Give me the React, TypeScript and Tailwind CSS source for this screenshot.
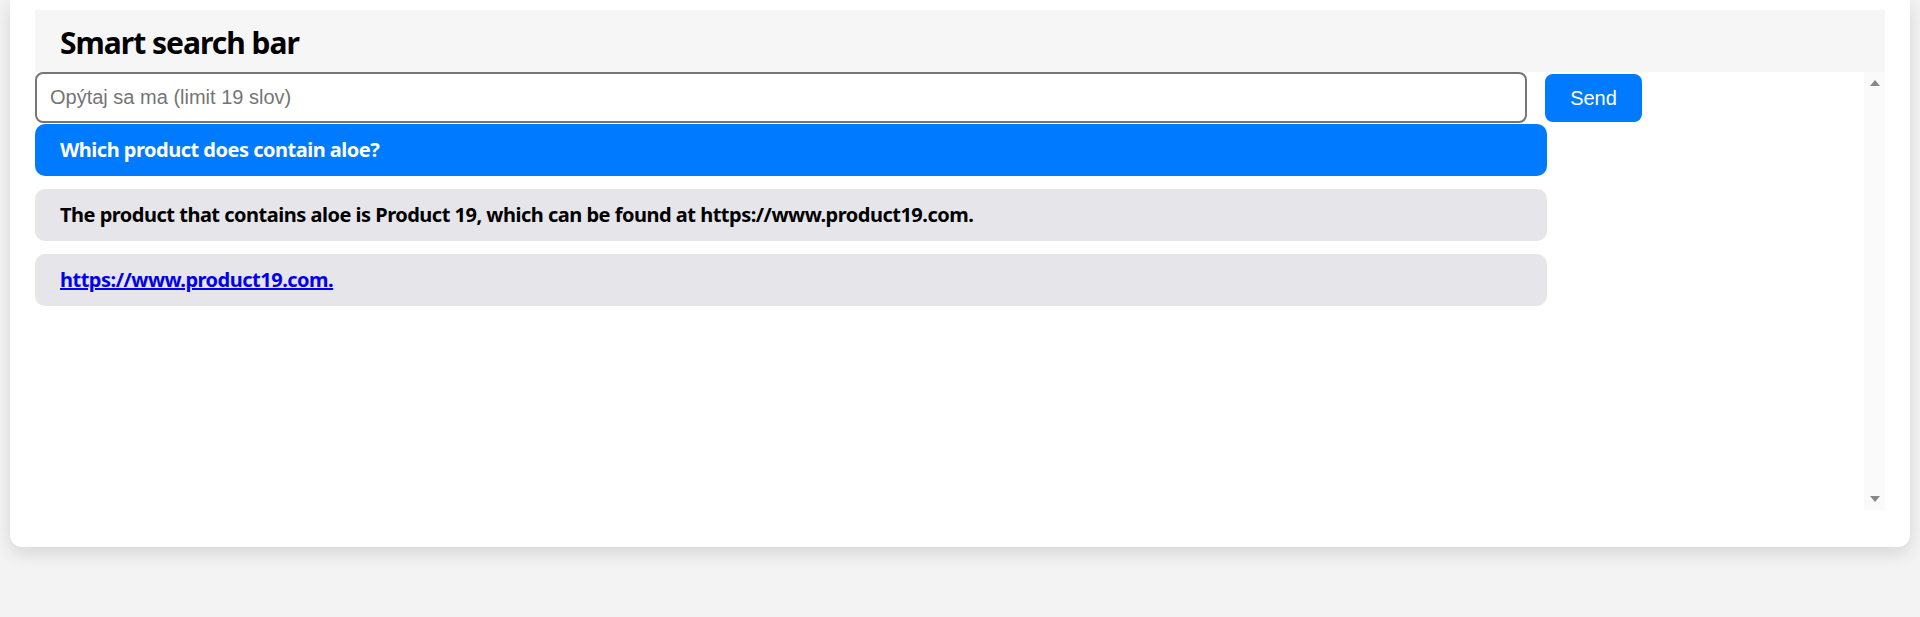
import React from 'react';

const messages = [
    { kind: 'user', text: 'Which product does contain aloe?' },
    { kind: 'bot', text: 'The product that contains aloe is Product 19, which can be found at https://www.product19.com.' },
    { kind: 'link', text: 'https://www.product19.com.' },
];

const App: React.FC = () => {
    return (
        <div className="min-h-screen bg-[#f3f3f3] px-[10px] font-['Noto_Sans',sans-serif]">
            {/* ---------- card ---------- */}
            <div className="bg-white rounded-b-[12px] shadow-[0_6px_18px_rgba(0,0,0,0.12)] px-[25px] pt-[10px] pb-[37px]">
                <div className="h-[62px] bg-[#f6f6f6] flex items-center pl-[25px]">
                    <h2 className="text-[30px] font-bold text-black tracking-[-1px] mt-[2px]">Smart search bar</h2>
                </div>

                {/* chat area with its scrollbar */}
                <div className="flex h-[438px]">
                    <div className="flex-1 min-w-0">
                        <div className="flex items-center h-[51px]">
                            <input
                                type="text"
                                placeholder="Opýtaj sa ma (limit 19 slov)"
                                className="w-[1492px] h-[51px] border-2 border-[#767676] rounded-[8px] pl-[13px] text-[20px] font-['Liberation_Sans',Arial,sans-serif] placeholder:text-[#757575] outline-none"
                            />
                            <button className="ml-[18px] w-[97px] h-[48px] bg-[#007bff] text-white rounded-[8px] text-[20px] font-['Liberation_Sans',Arial,sans-serif]">
                                Send
                            </button>
                        </div>

                        <div className="w-[1512px] flex flex-col gap-[13px] mt-[1px]">
                            {messages.map(({ kind, text }) => (
                                <div
                                    key={kind}
                                    className={
                                        kind === 'user'
                                            ? 'h-[52px] flex items-center pl-[25px] rounded-[10px] bg-[#007bff] text-white text-[20px] font-bold tracking-[-0.5px]'
                                            : 'h-[52px] flex items-center pl-[25px] rounded-[10px] bg-[#e5e5ea] text-black text-[20px] font-bold tracking-[-0.5px]'
                                    }
                                >
                                    {kind === 'link'
                                        ? <a href="#" className="text-[#0000ee] underline">{text}</a>
                                        : <span>{text}</span>}
                                </div>
                            ))}
                        </div>
                    </div>

                    {/* fake classic scrollbar */}
                    <div className="w-[21px] bg-[#fafafa] flex flex-col justify-between items-center py-[8px]">
                        <svg width="10" height="6" viewBox="0 0 10 6"><path d="M5 0L10 6H0z" fill="#888" /></svg>
                        <svg width="10" height="6" viewBox="0 0 10 6"><path d="M0 0h10L5 6z" fill="#888" /></svg>
                    </div>
                </div>
            </div>
        </div>
    );
};

export default App;
